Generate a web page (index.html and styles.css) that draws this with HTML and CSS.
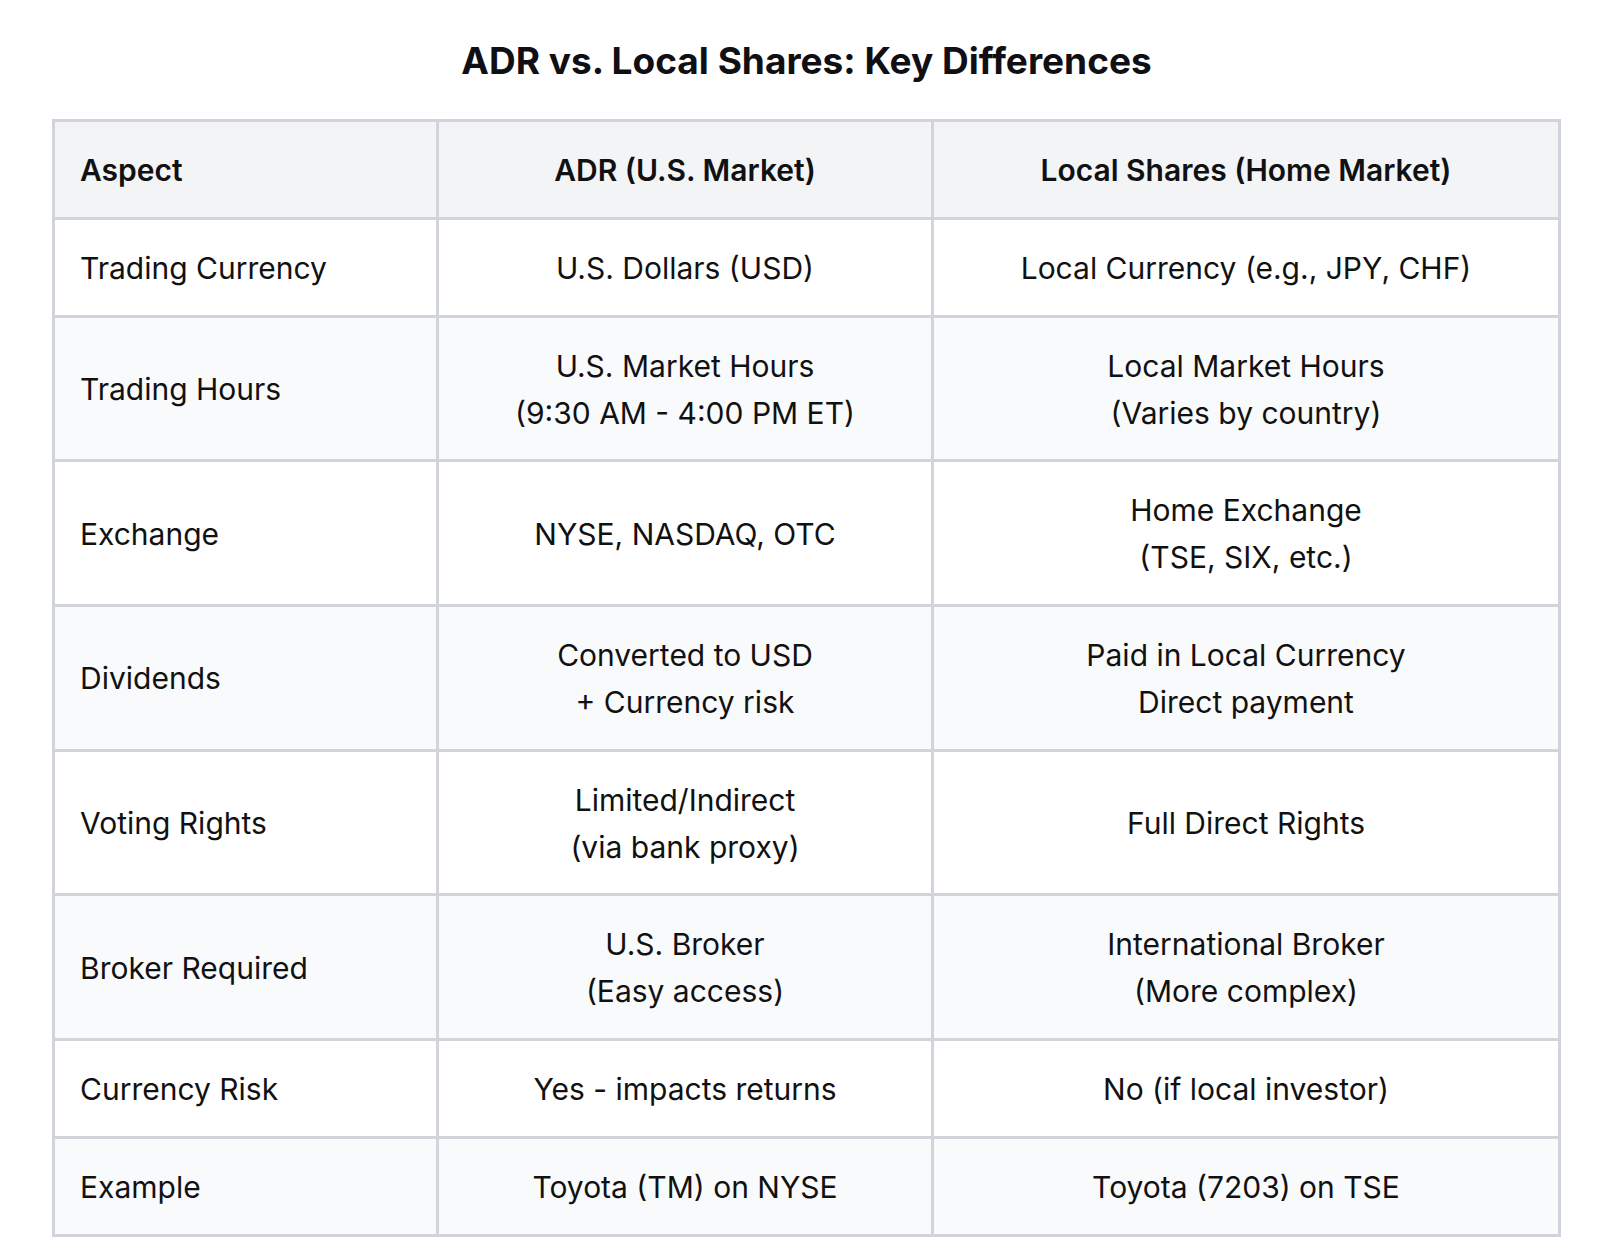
FILE: index.html
```html
<!DOCTYPE html>
<html lang="en">
<head>
<meta charset="utf-8">
<title>ADR vs. Local Shares: Key Differences</title>
<link rel="stylesheet" href="styles.css">
</head>
<body>
<main class="page">
  <h1 class="title">ADR vs. Local Shares: Key Differences</h1>
  <table class="compare">
    <colgroup>
      <col class="c-aspect">
      <col class="c-adr">
      <col class="c-local">
    </colgroup>
    <thead>
      <tr>
        <th class="left">Aspect</th>
        <th>ADR (U.S. Market)</th>
        <th>Local Shares (Home Market)</th>
      </tr>
    </thead>
    <tbody>
      <tr>
        <td class="left">Trading Currency</td>
        <td>U.S. Dollars (USD)</td>
        <td>Local Currency (e.g., JPY, CHF)</td>
      </tr>
      <tr>
        <td class="left">Trading Hours</td>
        <td>U.S. Market Hours<br>(9:30 AM - 4:00 PM ET)</td>
        <td>Local Market Hours<br>(Varies by country)</td>
      </tr>
      <tr>
        <td class="left">Exchange</td>
        <td>NYSE, NASDAQ, OTC</td>
        <td>Home Exchange<br>(TSE, SIX, etc.)</td>
      </tr>
      <tr>
        <td class="left">Dividends</td>
        <td>Converted to USD<br>+ Currency risk</td>
        <td>Paid in Local Currency<br>Direct payment</td>
      </tr>
      <tr>
        <td class="left">Voting Rights</td>
        <td>Limited/Indirect<br>(via bank proxy)</td>
        <td>Full Direct Rights</td>
      </tr>
      <tr>
        <td class="left">Broker Required</td>
        <td>U.S. Broker<br>(Easy access)</td>
        <td>International Broker<br>(More complex)</td>
      </tr>
      <tr>
        <td class="left">Currency Risk</td>
        <td>Yes - impacts returns</td>
        <td>No (if local investor)</td>
      </tr>
      <tr>
        <td class="left">Example</td>
        <td>Toyota (TM) on NYSE</td>
        <td>Toyota (7203) on TSE</td>
      </tr>
    </tbody>
  </table>
</main>
</body>
</html>
```

FILE: styles.css
```css
html, body {
  margin: 0;
  padding: 0;
  background: #ffffff;
}

body {
  font-family: Inter, "Noto Sans", "Liberation Sans", sans-serif;
  color: #111111;
}

.page {
  width: 1509px;
  padding: 42px 0 0 52px;
}

.title {
  margin: 0 0 40px 0;
  font-size: 37px;
  line-height: 37px;
  font-weight: 700;
  text-align: center;
  color: #0f0f14;
}

.compare {
  width: 1509px;
  border-collapse: collapse;
  table-layout: fixed;
  border: 3px solid #d1d5db;
  font-size: 30px;
  line-height: 46.85px;
}

.c-aspect { width: 384px; }
.c-adr { width: 495px; }
.c-local { width: 627px; }

.compare th,
.compare td {
  border: 3px solid #d1d5db;
  padding: 25px 25px 23px 25px;
  text-align: center;
  vertical-align: middle;
}

.compare th {
  background: #f3f4f6;
  font-weight: 600;
}

.compare td {
  font-weight: 400;
}

.compare .left {
  text-align: left;
}

.compare tbody tr:nth-child(odd) td {
  background: #ffffff;
}

.compare tbody tr:nth-child(even) td {
  background: #f9fafb;
}
```
